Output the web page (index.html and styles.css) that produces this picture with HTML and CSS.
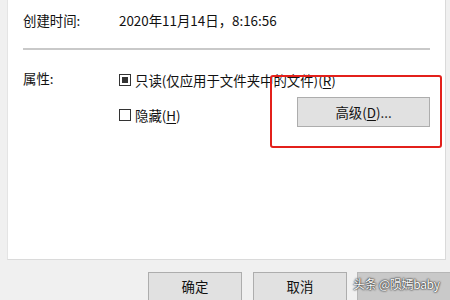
FILE: index.html
```html
<!DOCTYPE html>
<html lang="zh-CN">
<head>
<meta charset="utf-8">
<link rel="stylesheet" href="styles.css">
</head>
<body>
<div class="panel">
  <div class="row top-row">
    <span class="label">创建时间:</span>
    <span class="value">2020年11月14日，8:16:56</span>
  </div>
  <div class="sep"></div>
  <div class="attrs">
    <span class="label attr-label">属性:</span>
    <div class="attr-col">
      <label class="check"><span class="box box-mixed"></span><span>只读(仅应用于文件夹中的文件)(<u>R</u>)</span></label>
      <div class="row2">
        <label class="check check2"><span class="box"></span><span>隐藏(<u>H</u>)</span></label>
        <button class="btn adv">高级(<u>D</u>)...</button>
      </div>
    </div>
  </div>
</div>
<div class="footer">
  <button class="btn foot">确定</button>
  <button class="btn foot">取消</button>
  <button class="btn foot apply"></button>
</div>
<div class="mark"></div>
<div class="watermark">头条 @陨嫣baby</div>
</body>
</html>
```
FILE: styles.css
```css
html, body {
  margin: 0;
  padding: 0;
}
body {
  width: 450px;
  height: 300px;
  overflow: hidden;
  background: #f0f0f0;
  font-family: "Noto Sans CJK SC", sans-serif;
  font-size: 13.4px;
  color: #111;
  position: relative;
}
.panel {
  margin-left: 7px;
  width: 439px;
  height: 260px;
  box-sizing: border-box;
  background: #fff;
  border-right: 1px solid #dadada;
  border-bottom: 1px solid #dadada;
  border-left: 1px solid #e4e4e4;
  padding: 10px 15px 0 15px;
}
.row {
  display: flex;
  line-height: 20px;
}
.label {
  width: 96px;
  flex: none;
  line-height: 20px;
}
.sep {
  margin-top: 18px;
  height: 2px;
  background: #c9c9c9;
  width: 407px;
}
.attrs {
  display: flex;
  margin-top: 20px;
}
.attr-label {
  margin-top: -2px;
}
.attr-col {
  flex: 1;
  display: flex;
  flex-direction: column;
}
.check {
  display: flex;
  align-items: center;
  gap: 4px;
  line-height: 20px;
  height: 20px;
}
.box {
  width: 12px;
  height: 12px;
  box-sizing: border-box;
  border: 1px solid #333;
  display: flex;
  align-items: center;
  justify-content: center;
  background: #fff;
}
.box-mixed::after {
  content: "";
  width: 6px;
  height: 6px;
  background: #333;
}
.row2 {
  display: flex;
  align-items: flex-start;
  margin-top: 7px;
}
.check2 {
  margin-top: 8px;
}
u {
  text-decoration-thickness: 1px;
  text-underline-offset: 2px;
}
.btn {
  font-family: inherit;
  font-size: 13.4px;
  color: #111;
  background: #e1e1e1;
  border: 1px solid #adadad;
  padding: 0;
  margin: 0;
  height: 30px;
}
.adv {
  margin-left: auto;
  width: 133px;
}
.footer {
  display: flex;
  gap: 11px;
  padding: 12px 0 0 148px;
}
.foot {
  width: 94px;
  flex: none;
  padding-bottom: 3px;
}
.apply {
  margin-left: -1px;
  background: #c9c9c9;
  border-color: #b6b6b6;
}
.mark {
  position: absolute;
  left: 270px;
  top: 75px;
  width: 172px;
  height: 73px;
  box-sizing: border-box;
  border: 2px solid #e3201b;
  border-radius: 3px;
}
.watermark {
  position: absolute;
  left: 353px;
  top: 275px;
  font-size: 12px;
  line-height: 18px;
  letter-spacing: -0.3px;
  color: #fafafa;
  text-shadow: 0 0 1px #333, 0 0 2px #444, 0 0 2px #555;
  white-space: nowrap;
}
```
